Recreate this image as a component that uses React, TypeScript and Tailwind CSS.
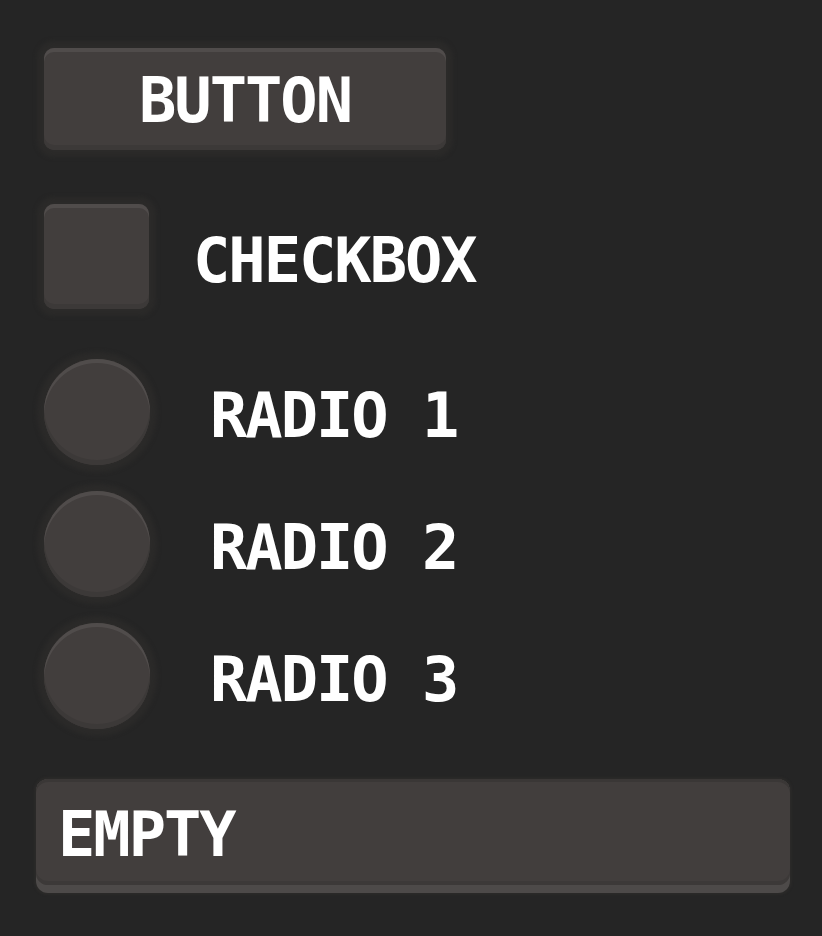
const face =
  'bg-[#423e3d] shadow-[inset_0_4px_0_#504c4b,inset_0_-5px_0_#3c3938,0_0_4px_7px_#2b2a29]';

function Radio({ label }: { label: string }) {
  return (
    <div className="flex items-center gap-[60px]">
      <div className={`h-[106px] w-[106px] rounded-full ${face}`} />
      <span className="pt-[8px]">{label}</span>
    </div>
  );
}

export default function App() {
  return (
    <div
      className="min-h-screen bg-[#252525] pl-[44px] pt-[48px] text-[62px] font-bold leading-none tracking-[-2px] text-white"
      style={{ fontFamily: '"DejaVu Sans Mono", "Liberation Mono", monospace' }}
    >
      <button
        type="button"
        className={`flex h-[102px] w-[402px] items-center justify-center rounded-[10px] pt-[3px] ${face}`}
      >
        BUTTON
      </button>

      <div className="mt-[54px] flex items-center gap-[44px]">
        <div className={`h-[105px] w-[105px] rounded-[10px] ${face}`} />
        <span className="pt-[8px]">CHECKBOX</span>
      </div>

      <div className="mt-[50px] flex flex-col gap-[26px]">
        <Radio label="RADIO 1" />
        <Radio label="RADIO 2" />
        <Radio label="RADIO 3" />
      </div>

      <div className="mt-[50px] -ml-[8px] w-[754px] rounded-[12px] bg-[#4d4a49] pb-[8px] shadow-[0_0_2px_2px_#2b2a29]">
        <div className="flex h-[106px] items-center rounded-[12px] bg-[#423e3d] pl-[22px] pt-[6px] shadow-[inset_0_3px_0_#3a3736,inset_0_-4px_0_#3c3938]">
          EMPTY
        </div>
      </div>
    </div>
  );
}
